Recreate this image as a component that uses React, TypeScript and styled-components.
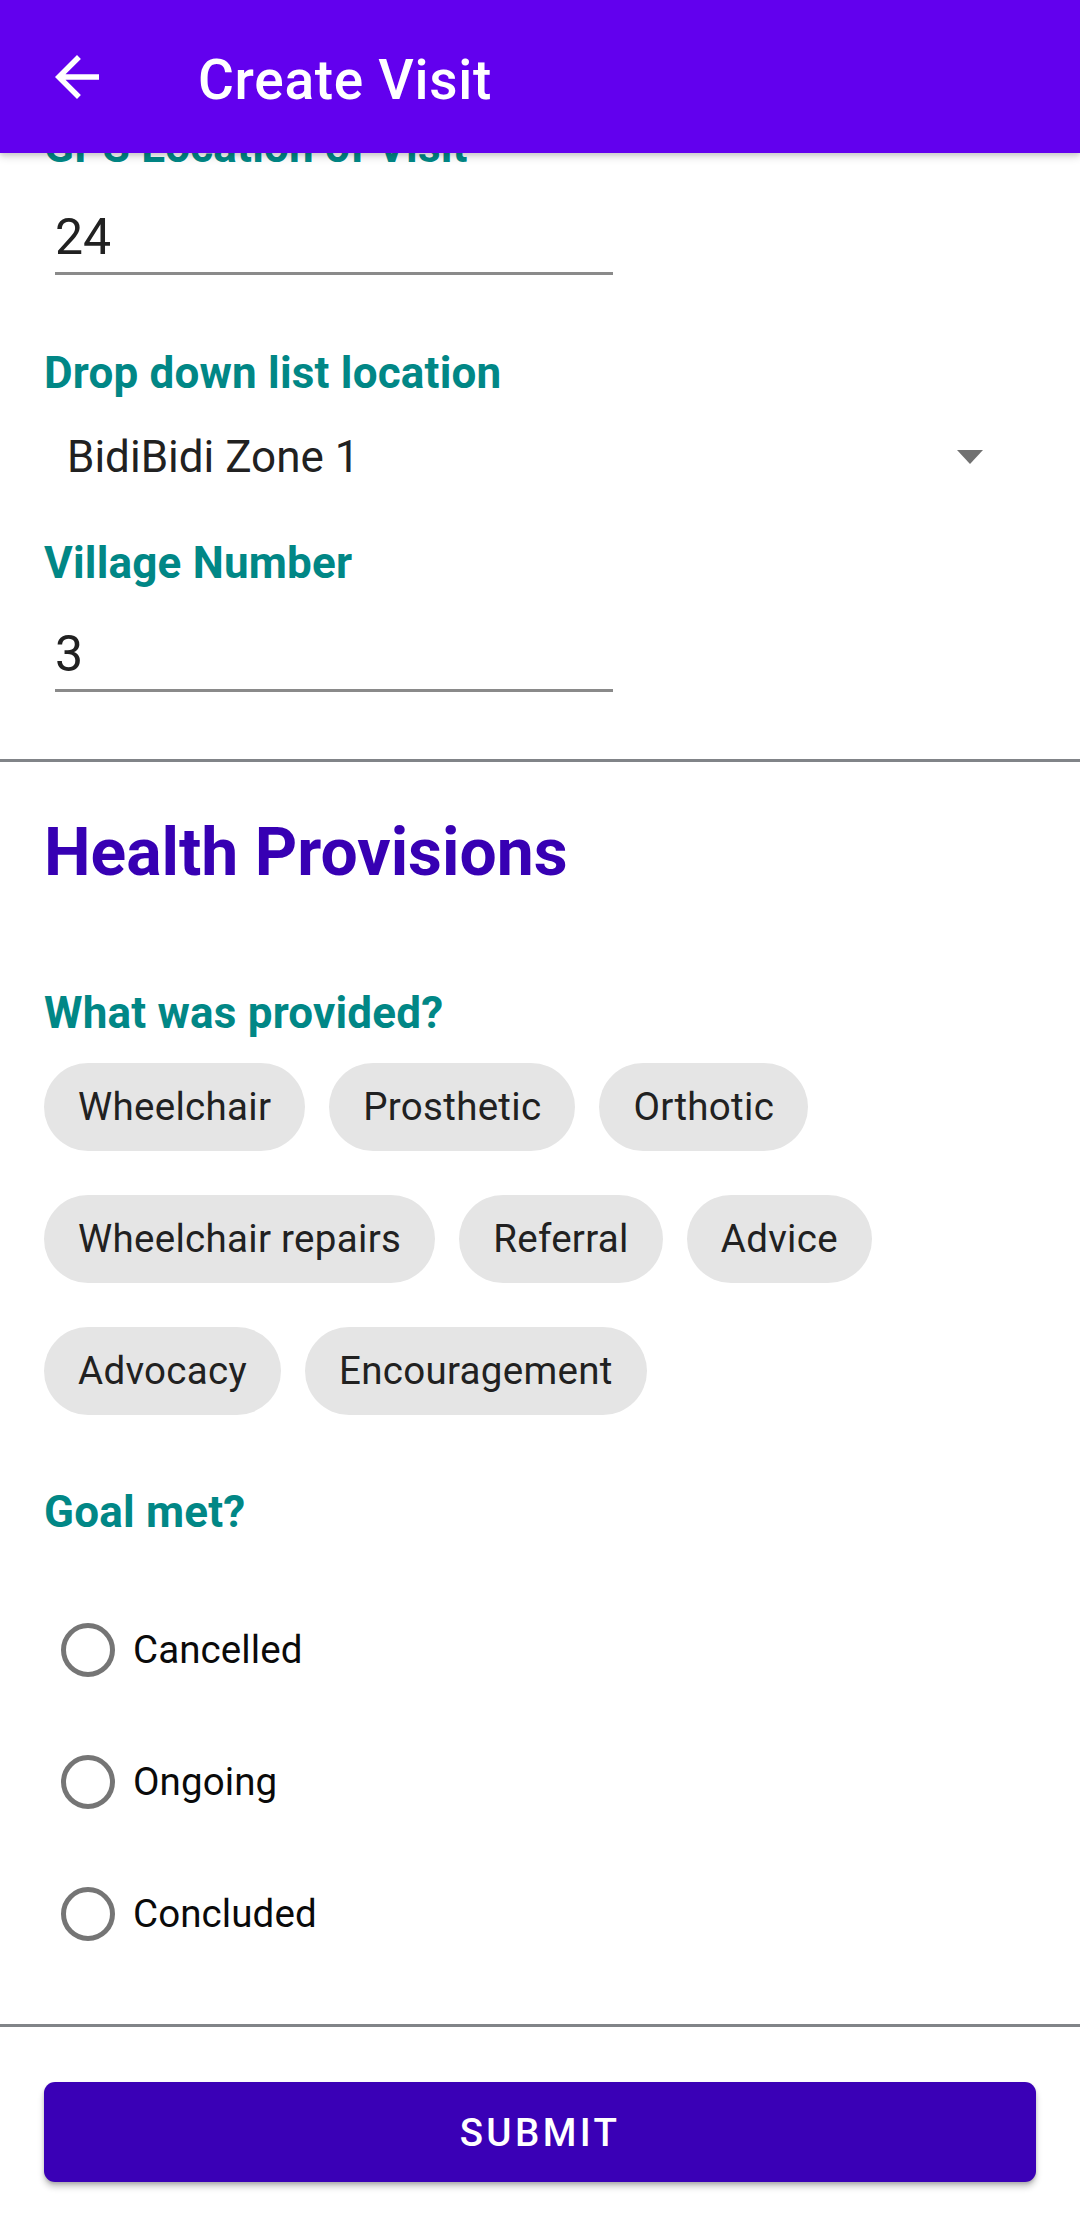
import React from "react";
import styled, { createGlobalStyle } from "styled-components";

const GlobalStyle = createGlobalStyle`
  html, body { margin: 0; padding: 0; background: #ffffff; }
  body { font-family: Roboto, "Noto Sans", "Liberation Sans", sans-serif; -webkit-font-smoothing: antialiased; }
  * { box-sizing: border-box; }
`;

const Screen = styled.div`
  width: 1080px;
  height: 2220px;
  overflow: hidden;
  display: flex;
  flex-direction: column;
  background: #ffffff;
`;

const AppBar = styled.header`
  position: relative;
  z-index: 2;
  flex: 0 0 153px;
  height: 153px;
  background: #6200ee;
  display: flex;
  align-items: center;
  padding-left: 44px;
  gap: 88px;
  box-shadow: 0 4px 8px rgba(0, 0, 0, 0.14), 0 2px 4px rgba(0, 0, 0, 0.1);
`;

const BackButton = styled.div`
  width: 66px;
  height: 66px;
  display: flex;
  align-items: center;
  justify-content: center;
  margin-top: 1px;
`;

const Title = styled.h1`
  margin: 0;
  padding-top: 7px;
  font-size: 55px;
  line-height: 64px;
  font-weight: 500;
  color: #ffffff;
  letter-spacing: 0.7px;
`;

const Content = styled.main`
  position: relative;
  z-index: 1;
  margin-top: -32px;
  display: flex;
  flex-direction: column;
`;

const Section = styled.section`
  display: flex;
  flex-direction: column;
  padding: 0 44px;
`;

const FieldLabel = styled.div<{ $mt?: number }>`
  margin-top: ${(p) => p.$mt ?? 0}px;
  font-size: 44px;
  line-height: 52px;
  height: 52px;
  font-weight: 700;
  color: #018786;
  letter-spacing: 0.2px;
  white-space: nowrap;
`;

const TextInput = styled.div<{ $mt: number }>`
  margin-top: ${(p) => p.$mt}px;
  margin-left: 11px;
  width: 558px;
  font-size: 50px;
  line-height: 60px;
  color: #212121;
  padding-bottom: 5px;
  border-bottom: 3px solid #8a8a8a;
`;

const Dropdown = styled.div<{ $mt: number }>`
  margin-top: ${(p) => p.$mt}px;
  height: 52px;
  display: flex;
  align-items: center;
  justify-content: space-between;
  padding-left: 23px;
  padding-right: 53px;
`;

const DropdownValue = styled.span`
  font-size: 44px;
  line-height: 52px;
  color: #212121;
`;

const Caret = styled.span`
  width: 0;
  height: 0;
  border-left: 13px solid transparent;
  border-right: 13px solid transparent;
  border-top: 14px solid #717171;
`;

const Divider = styled.hr<{ $mt: number }>`
  margin: ${(p) => p.$mt}px 0 0 0;
  height: 3px;
  border: none;
  background: #818488;
  width: 100%;
`;

const Heading = styled.h2<{ $mt: number }>`
  margin: ${(p) => p.$mt}px 0 0 0;
  font-size: 66px;
  line-height: 78px;
  height: 78px;
  font-weight: 700;
  color: #3700b3;
`;

const ChipGroup = styled.div<{ $mt: number }>`
  margin-top: ${(p) => p.$mt}px;
  display: flex;
  flex-wrap: wrap;
  column-gap: 24px;
  row-gap: 44px;
`;

const Chip = styled.span`
  height: 88px;
  border-radius: 44px;
  background: #e5e5e5;
  padding: 0 34px;
  font-size: 38.5px;
  line-height: 88px;
  letter-spacing: 0.3px;
  color: #212121;
  white-space: nowrap;
`;

const RadioGroup = styled.div<{ $mt: number }>`
  margin-top: ${(p) => p.$mt}px;
  display: flex;
  flex-direction: column;
`;

const RadioRow = styled.label`
  height: 132px;
  display: flex;
  align-items: center;
  padding-left: 17px;
  gap: 18px;
`;

const RadioCircle = styled.span`
  width: 54px;
  height: 54px;
  border-radius: 50%;
  border: 5.5px solid #757575;
  flex: 0 0 54px;
`;

const RadioText = styled.span`
  font-size: 38.5px;
  line-height: 46px;
  letter-spacing: 0.1px;
  color: #0a0a0a;
`;

const SubmitButton = styled.button<{ $mt: number }>`
  margin: ${(p) => p.$mt}px 0 0 0;
  height: 100px;
  width: 992px;
  border: none;
  border-radius: 11px;
  background: #3a00b6;
  color: #ffffff;
  font-family: Roboto, "Noto Sans", sans-serif;
  font-size: 38.5px;
  font-weight: 500;
  letter-spacing: 3.4px;
  text-transform: uppercase;
  box-shadow: 0 5px 6px rgba(0, 0, 0, 0.22), 0 2px 3px rgba(0, 0, 0, 0.14);
`;

const provisions = [
  "Wheelchair",
  "Prosthetic",
  "Orthotic",
  "Wheelchair repairs",
  "Referral",
  "Advice",
  "Advocacy",
  "Encouragement",
];

const goals = ["Cancelled", "Ongoing", "Concluded"];

const ArrowBack = () => (
  <svg width="66" height="66" viewBox="0 0 24 24" aria-hidden="true">
    <path
      fill="#ffffff"
      d="M20 11H7.83l5.59-5.59L12 4l-8 8 8 8 1.41-1.41L7.83 13H20v-2z"
    />
  </svg>
);

export default function App() {
  return (
    <Screen>
      <GlobalStyle />
      <AppBar>
        <BackButton>
          <ArrowBack />
        </BackButton>
        <Title>Create Visit</Title>
      </AppBar>
      <Content>
        <Section>
          <FieldLabel>GPS Location of Visit</FieldLabel>
          <TextInput $mt={34}>24</TextInput>
          <FieldLabel $mt={72}>Drop down list location</FieldLabel>
          <Dropdown $mt={32}>
            <DropdownValue>BidiBidi Zone 1</DropdownValue>
            <Caret />
          </Dropdown>
          <FieldLabel $mt={54}>Village Number</FieldLabel>
          <TextInput $mt={35}>3</TextInput>
        </Section>
        <Divider $mt={67} />
        <Section>
          <Heading $mt={52}>Health Provisions</Heading>
          <FieldLabel $mt={95}>What was provided?</FieldLabel>
          <ChipGroup $mt={24}>
            {provisions.map((p) => (
              <Chip key={p}>{p}</Chip>
            ))}
          </ChipGroup>
          <FieldLabel $mt={71}>Goal met?</FieldLabel>
          <RadioGroup $mt={46}>
            {goals.map((g) => (
              <RadioRow key={g}>
                <RadioCircle />
                <RadioText>{g}</RadioText>
              </RadioRow>
            ))}
          </RadioGroup>
        </Section>
        <Divider $mt={44} />
        <Section>
          <SubmitButton $mt={55}>Submit</SubmitButton>
        </Section>
      </Content>
    </Screen>
  );
}
